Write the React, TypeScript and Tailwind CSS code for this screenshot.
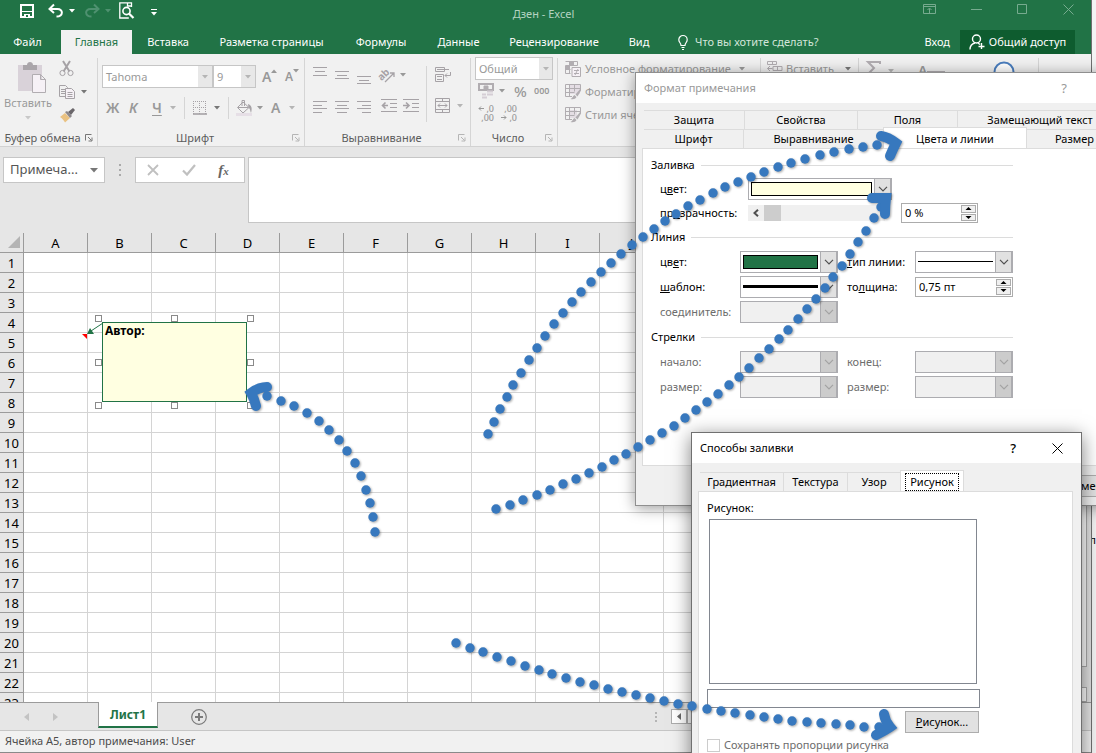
import React from "react";

type Kids = { children?: React.ReactNode };

const Caret = ({ className = "text-[#b5b5b5]" }: { className?: string }) => (
  <svg width="6" height="4" viewBox="0 0 6 4" className={`shrink-0 ${className}`} aria-hidden="true">
    <path d="M0 0h6L3 3.5z" fill="currentColor" />
  </svg>
);

type IconProps = Kids & { w?: number; h?: number; className?: string };

const Icon = ({ w = 16, h = 16, className = "text-[#b1adb1]", children }: IconProps) => (
  <svg
    width={w}
    height={h}
    viewBox={`0 0 ${w} ${h}`}
    fill="none"
    stroke="currentColor"
    className={`shrink-0 overflow-visible ${className}`}
    aria-hidden="true"
  >
    {children}
  </svg>
);

const Launcher = ({ className = "text-[#b5b5b5]" }: { className?: string }) => (
  <Icon w={8} h={8} className={className}>
    <path d="M6.5 .5h-6v6M3 3l3.5 3.5M7 3.500V7H3.500" />
  </Icon>
);

function Group({
  label,
  className,
  dark,
  children,
}: Kids & { label?: string; className: string; dark?: boolean }) {
  return (
    <section className={`flex shrink-0 flex-col ${className}`}>
      <div className="my-1 flex grow flex-col border-r border-[#d5d5d5]">
        <div className="h-[72px]">{children}</div>
        {label && (
          <div className="flex h-4 items-center pr-1">
            <span className="grow text-center text-[#5c5c5c]">{label}</span>
            <Launcher className={dark ? "text-[#777777]" : undefined} />
          </div>
        )}
      </div>
    </section>
  );
}

const AlignLines = ({ ys, kind }: { ys: number[]; kind: "left" | "center" | "right" }) => (
  <Icon w={14} h={18} className="text-[#a6a2a6]">
    {ys.map((y, i) => {
      const short = i % 2 === 1;
      const x1 = !short || kind === "left" ? 0 : kind === "center" ? 2 : 5;
      const x2 = !short || kind === "right" ? 14 : kind === "center" ? 12 : 9;
      return <path key={y} d={`M${x1} ${y}.5H${x2}`} />;
    })}
  </Icon>
);

const GridBrush = ({ dark }: { dark?: boolean }) => (
  <Icon>
    {dark ? <path d="M4 3h8v8H4z" fill="#e4dde4" stroke="none" /> : <path d="M5 1h10v9H5z" fill="#e4dde4" stroke="none" />}
    <path d="M15.500 6V.5H.5v12H7M.5 4.500h15M.5 8.500h9M4.500.5v12M9.500.5v7" />
    <path d="M15.500 4.500l-5 6 2 2 3.500-6z" fill="currentColor" stroke="none" />
    <path d="M9.500 11l2 2c-1 2-3 2.500-6 2 2-.5 2-3 4-4z" fill="currentColor" stroke="none" />
  </Icon>
);

const Chevron = () => (
  <svg width="10" height="6" viewBox="0 0 10 6" fill="none" stroke="currentColor" aria-hidden="true">
    <path d="M1 .8l4 4 4-4" strokeWidth="1.200" />
  </svg>
);

function Combo({
  id,
  label,
  className,
  disabled,
  children,
}: Kids & { id: string; label: string; className: string; disabled?: boolean }) {
  return (
    <button
      id={id}
      type="button"
      aria-label={label}
      aria-haspopup="listbox"
      disabled={disabled}
      className={`flex h-[22px] shrink-0 border border-r-2 border-[#acacb0] ${
        disabled ? "bg-[#f0f0f0] text-[#a3a3a3]" : "bg-white text-[#505050]"
      } ${className}`}
    >
      <span className="flex h-full grow items-center p-[2px]">{children}</span>
      <span
        className={`flex h-full w-4 items-center justify-center border-l border-[#acacb0] ${
          disabled ? "bg-[#cccccc]" : "bg-[#e1e1e1]"
        }`}
      >
        <Chevron />
      </span>
    </button>
  );
}

function Spin({ id, value, className }: { id: string; value: string; className: string }) {
  return (
    <span className={`flex h-5 shrink-0 border border-[#acacac] bg-white p-px ${className}`}>
      <input id={id} defaultValue={value} className="w-0 grow bg-transparent pl-[2px] text-black outline-none" />
      <span className="flex w-[15px] flex-col gap-px">
        {["M3.500 0l3 3h-6z", "M3.500 3l3-3h-6z"].map((d, i) => (
          <button
            key={d}
            type="button"
            aria-label={i === 0 ? "Увеличить" : "Уменьшить"}
            className="flex grow items-center justify-center border border-[#acacac] bg-[#f0f0f0]"
          >
            <svg width="7" height="3" viewBox="0 0 7 3" aria-hidden="true">
              <path d={d} />
            </svg>
          </button>
        ))}
      </span>
    </span>
  );
}

function Heading({ children }: Kids) {
  return (
    <h3 className="flex h-6 items-center gap-[6px]">
      {children}
      <span className="h-px grow bg-[#dcdcdc]" />
    </h3>
  );
}

const menuTabs = [
  ["Вставка", "w-[72px]"],
  ["Разметка страницы", "w-[135px]"],
  ["Формулы", "w-[84px]"],
  ["Данные", "w-[71px]"],
  ["Рецензирование", "w-[120px]"],
  ["Вид", "w-[50px]"],
];

function TitleBar() {
  return (
    <header className="bg-[#217346] text-white">
      <div className="flex h-[30px] items-start">
        <div className="flex w-[260px] shrink-0 pt-[2px] pl-[20px]">
          <button type="button" aria-label="Сохранить" className="w-7">
            <Icon w={14} h={16} className="text-white">
              <path d="M1 2h12v12H1z" strokeWidth="2" />
              <path d="M2 8.500h10" strokeWidth="1" />
              <path d="M4 11h6v4H4z" fill="currentColor" stroke="none" />
              <path d="M6 12h2v2H6z" fill="#217346" stroke="none" />
            </Icon>
          </button>
          <button type="button" aria-label="Отменить" className="flex w-9 items-center gap-[5px]">
            <Icon w={16} h={16} className="text-white">
              <path d="M2 6h7.500c6 0 6 7.500-1 7.500M6 1.500L1.500 6 6 10" strokeWidth="2" />
            </Icon>
            <Caret className="text-white" />
          </button>
          <button type="button" aria-label="Вернуть" className="flex w-[35px] items-center gap-[5px]">
            <Icon w={16} h={16} className="text-[#4f9170]">
              <path d="M14 6H6.500c-6 0-6 7.500 1 7.500M10 1.500L14.500 6 10 10" strokeWidth="2" />
            </Icon>
            <Caret className="text-[#4f9170]" />
          </button>
          <button type="button" aria-label="Просмотр" className="w-8">
            <Icon w={16} h={18} className="text-white">
              <path d="M12.500 5V.8H.8v15.200h9M8.500.5V4h4" strokeWidth="1.300" />
              <circle cx="7.500" cy="9" r="3.600" strokeWidth="1.600" />
              <path d="M10 11.500l4.500 4.500" strokeWidth="2.200" />
            </Icon>
          </button>
          <button type="button" aria-label="Настройка панели" className="flex flex-col items-center gap-[2px] pt-[7px]">
            <span className="h-px w-[6px] bg-white" />
            <Caret className="text-white" />
          </button>
        </div>
        <h1 className="grow pt-[6px] text-center text-[11px] leading-4 text-[#b5d3c2]">Дзен - Excel</h1>
        <div className="flex w-[264px] shrink-0 items-center justify-end gap-[35px] pt-[4px] pr-[17px] text-[#77ab8f]">
          <Icon w={13} h={11} className="text-current">
            <path d="M.5 .5h12v9H.5zM.5 2.500h12M6.500 9V4.500M4.500 6l2-2 2 2" />
          </Icon>
          <Icon w={11} h={11} className="text-current">
            <path d="M0 5.500h11" />
          </Icon>
          <Icon w={11} h={11} className="text-current">
            <path d="M.5 .5h9v9h-9z" />
          </Icon>
          <Icon w={11} h={11} className="text-current">
            <path d="M.5 .5l10 10M10.500 .5l-10 10" />
          </Icon>
        </div>
      </div>
      <nav className="flex h-6 items-stretch pr-4 text-[11px] whitespace-nowrap">
        <button type="button" className="w-[61px] pr-[6px]">Файл</button>
        <button type="button" className="w-[71px] bg-[#f1f1f1] text-[#217346]">Главная</button>
        {menuTabs.map(([name, w]) => (
          <button key={name} type="button" className={w}>
            {name}
          </button>
        ))}
        <button type="button" className="ml-[14px] flex items-center gap-[7px] text-[#d3e5da]">
          <Icon w={10} h={15} className="text-white">
            <path d="M3 10.500C3 8 .8 7.500.8 4.700a4.200 4.200 0 018.400 0C9.200 7.500 7 8 7 10.500zM3.500 12.500h3M4 14.500h2" strokeWidth="1.200" />
          </Icon>
          Что вы хотите сделать?
        </button>
        <button type="button" className="ml-auto pr-[10px]">Вход</button>
        <button type="button" className="flex w-[115px] items-center justify-center gap-1 bg-[#0e5c2f]">
          <Icon w={16} h={16} className="text-white">
            <circle cx="7.500" cy="5" r="4" strokeWidth="1.400" />
            <path d="M1 15.500c0-4 3-6 5-6.500M9 9l2 1.500M12.500 9v6M9.500 12.500h6" strokeWidth="1.400" />
          </Icon>
          Общий доступ
        </button>
      </nav>
    </header>
  );
}

function Ribbon() {
  return (
    <div className="flex h-[93px] shrink-0 overflow-hidden border-b border-[#d2d2d2] bg-[#f1f1f1] text-[11px] leading-4 whitespace-nowrap text-[#999999]">
      <Group label="Буфер обмена" className="w-[98px]" dark>
        <div className="flex">
          <button type="button" className="flex w-[56px] flex-col items-center pt-1">
            <Icon w={28} h={31} className="ml-2 text-[#b1adb1]">
              <path d="M0 3h24v26H0z" fill="#d9d2d9" stroke="none" />
              <path d="M5 3h4c0-4 6-4 6 0h4v5H5z" fill="#aaa6aa" stroke="none" />
              <path d="M14.500 12.500h8l5 5v13h-13zM22.500 12.500v5h5" fill="#f6f1f6" />
            </Icon>
            <span className="mt-[2px]">Вставить</span>
            <Caret className="mt-[5px] text-[#c8c8c8]" />
          </button>
          <div className="flex flex-col gap-[7px] pt-[3px] pl-[3px]">
            <Icon className="text-[#a6a2a6]">
              <path d="M4 0l6.500 10.500M11 0L4.500 10.500" strokeWidth="2" />
              <circle cx="3.500" cy="12" r="2.600" />
              <circle cx="11.500" cy="12" r="2.600" />
            </Icon>
            <span className="flex w-7 items-center justify-between">
              <Icon className="text-[#a6a2a6]">
                <path d="M.5 1.500h6l2 2v9h-8zM2 5.500h5M2 7.500h5M2 9.500h5" />
                <path d="M6.500 4.500h6l3 3v7h-9zM8.500 8.500h5M8.500 10.500h5M8.500 12.500h5" fill="#f6f1f6" />
              </Icon>
              <Caret className="text-[#777777]" />
            </span>
            <Icon>
              <path d="M1 10l5-4 5 5-5 4.500c-1-2-3-4.500-5-5.500z" fill="#eac282" stroke="none" />
              <path d="M6 5l2-1 5 5-2 2z" fill="#8b878b" stroke="none" />
              <path d="M9 5l5-4 2 2-4 5z" fill="#6a666a" stroke="none" />
            </Icon>
          </div>
        </div>
      </Group>

      <Group label="Шрифт" className="w-[207px]">
        <div className="flex items-center pt-[7px] pl-1">
          <button type="button" className="flex h-[23px] w-[111px] items-center border border-[#c6c6c6] bg-white text-left">
            <span className="grow pl-[3px]">Tahoma</span>
            <span className="flex h-full w-[14px] items-center justify-center bg-[#e8e8e8]"><Caret /></span>
          </button>
          <button type="button" className="flex h-[23px] w-[43px] items-center border border-[#c6c6c6] bg-white text-left">
            <span className="grow pl-[3px]">9</span>
            <span className="flex h-full w-[14px] items-center justify-center bg-[#e8e8e8]"><Caret /></span>
          </button>
          <span className="ml-[6px] flex w-[23px] items-start text-[14px] font-semibold">
            A
            <svg width="6" height="4" viewBox="0 0 6 4" aria-hidden="true"><path d="M0 4h6L3 .5z" fill="#999999" /></svg>
          </span>
          <span className="flex items-start text-[12px] font-semibold">
            A
            <Caret className="text-[#999999]" />
          </span>
        </div>
        <div className="flex items-center pt-[9px] pl-2 text-[14px] leading-5 font-semibold">
          <span className="w-[23px]">Ж</span>
          <span className="w-[23px] italic">К</span>
          <span className="w-[18px] underline underline-offset-2">Ч</span>
          <Caret />
          <span className="ml-2 h-[22px] w-px bg-[#d5d5d5]" />
          <Icon w={14} h={14} className="ml-2 text-[#a6a2a6]">
            <path d="M.5 0v13M6.500 0v13M12.500 0v13M0 .5h13M0 6.500h13" strokeDasharray="1 1" />
            <path d="M0 13h14" strokeWidth="1.600" />
          </Icon>
          <Caret className="ml-[7px] text-[#777777]" />
          <span className="ml-2 h-[22px] w-px bg-[#d5d5d5]" />
          <Icon w={17} h={16} className="ml-[7px] text-[#a6a2a6]">
            <path d="M7 2l6 5.500-6 5.500L1.500 7.500zM6 6V.500h2.500V6M2 7.500h10" />
            <path d="M12 4c3.500 1 4.500 4 3 9-1-2-.5-4-2.500-5.500z" fill="currentColor" stroke="none" />
            <path d="M0 14.500h16" stroke="#e6dfe6" strokeWidth="3" />
          </Icon>
          <Caret className="ml-1" />
          <span className="ml-2 w-[18px]">A</span>
          <Caret />
        </div>
      </Group>

      <Group label="Выравнивание" className="w-[166px]">
        <div className="flex h-full gap-2 pl-2">
          <div className="flex w-[105px] flex-col gap-[14px] pt-[9px]">
            <div className="flex gap-2">
              <AlignLines ys={[0, 4, 8]} kind="center" />
              <AlignLines ys={[4, 8, 11]} kind="center" />
              <AlignLines ys={[9, 13, 16]} kind="center" />
              <Icon w={17} h={17} className="text-[#a6a2a6]">
                <text x="-1" y="10" fontSize="10" fontWeight="700" fill="currentColor" stroke="none" fontFamily="Noto Sans" transform="rotate(-45 6 8)">ab</text>
                <path d="M6 15l9-9M11 6h4v4" strokeWidth="1.300" />
              </Icon>
              <Caret className="-ml-1 mt-[6px]" />
            </div>
            <div className="flex gap-2">
              <AlignLines ys={[2, 6, 9, 13]} kind="left" />
              <AlignLines ys={[2, 6, 9, 13]} kind="center" />
              <AlignLines ys={[2, 6, 9, 13]} kind="right" />
              <Icon className="ml-[2px] text-[#a6a2a6]">
                <path d="M0 .5h16M9 4.500h7M9 8.500h7M0 12.500h16" />
                <path d="M7 6.500H2M4.500 3.500l-3 3 3 3" strokeWidth="1.600" />
              </Icon>
              <Icon className="-ml-[2px] text-[#a6a2a6]">
                <path d="M0 .5h16M9 4.500h7M9 8.500h7M0 12.500h16" />
                <path d="M0 6.500h5M3 3.500l3 3-3 3" strokeWidth="1.600" />
              </Icon>
            </div>
          </div>
          <div className="h-[56px] w-px self-center bg-[#d5d5d5]" />
          <div className="flex flex-col gap-[15px] pt-[9px]">
            <Icon className="text-[#a6a2a6]">
              <path d="M.5 .5h9v4h-9zM.5 7.500h8v7h-8zM2 2.500h12M2 9.500h5M2 12.500h5M15.500 5v3.500H10M12 6.500l-2 2 2 2" />
            </Icon>
            <div className="flex items-center gap-[6px]">
              <Icon className="text-[#a6a2a6]">
                <path d="M.5 .5h14v14H.5zM.5 3.500h14M.5 11.500h14M7.500.5v3M7.500 11.500v3M3 7.500h9M5 5.500l-2 2 2 2M10 5.500l2 2-2 2" />
              </Icon>
              <Caret />
            </div>
          </div>
        </div>
      </Group>

      <Group label="Число" className="w-[87px]">
        <div className="-mt-px pl-1">
          <button type="button" className="flex h-[23px] w-[78px] items-center border border-[#c6c6c6] bg-white text-left">
            <span className="grow pl-[3px]">Общий</span>
            <span className="flex h-full w-[13px] items-center justify-center bg-[#e8e8e8]"><Caret /></span>
          </button>
          <div className="mt-[3px] flex items-center pl-[3px]">
            <Icon>
              <path d="M1 1h14v6H1z" strokeWidth="2" />
              <path d="M6 3h4v3H6z" fill="currentColor" />
              <path d="M9 8.500h6M9 11.500h6M4 11.500h4M4 14.500h5" stroke="#d5ced5" strokeWidth="2" />
            </Icon>
            <Caret className="ml-[5px]" />
            <span className="ml-[9px] w-5 text-[15px] font-medium">%</span>
            <span className="text-[9px] font-semibold">000</span>
          </div>
          <div className="mt-[5px] flex gap-[7px] pl-[3px] text-[9px] leading-[9px] font-medium">
            <span className="flex w-4 flex-col items-end">
              <span className="flex items-center gap-[2px]">
                <Icon w={6} h={5} className="text-[#999999]"><path d="M6 2.500H1M3 .5l-2 2 2 2" /></Icon>
                ,0
              </span>
              <span>,00</span>
            </span>
            <span className="flex w-4 flex-col items-end">
              <span>,00</span>
              <span className="flex items-center gap-[2px]">
                <Icon w={6} h={5} className="text-[#999999]"><path d="M0 2.500h5M3 .5l2 2-2 2" /></Icon>
                ,0
              </span>
            </span>
          </div>
        </div>
      </Group>

      <Group className="w-[203px]">
        <div className="flex flex-col gap-[6px] pt-[2px] pl-[7px]">
          <span className="flex h-[17px] items-center gap-1">
            <Icon>
              <path d="M.5 .5h12v4H.5v8h5M4.500.5v12M.5 8.500h5" />
              <path d="M4 1h5v3H4zM0 5h5v3H0z" fill="currentColor" stroke="none" />
              <path d="M7 6.500h8.500v9H7zM9 9.500h5M9 12.500h5M13 8l-3 6" fill="#f6f1f6" />
            </Icon>
            Условное форматирование
            <Caret className="ml-1" />
          </span>
          <span className="flex h-[17px] items-center gap-1"><GridBrush /> Форматировать как таблицу</span>
          <span className="flex h-[17px] items-center gap-1"><GridBrush dark /> Стили ячеек</span>
        </div>
      </Group>

      <Group className="w-[98px]">
        <div className="flex items-center gap-[3px] pt-[3px] pl-[6px]">
          <Icon>
            <path d="M.5 .5h9v3h-9zM5.500.5v3M6 5.500h9v4H6zM10.500 5.500v4M.5 11.500h9v3h-9zM5.500 7.500h-5M3 5L.5 7.500 3 10" />
          </Icon>
          Вставить
          <Caret className="ml-2 text-[#777777]" />
        </div>
      </Group>

      <Group className="w-[180px]">
        <div className="flex pt-[3px] pl-[7px]">
          <Icon w={16} h={14}>
            <path d="M14 3V1H2l6 6-6 6h12v-2" strokeWidth="2" />
          </Icon>
          <Caret className="mt-2 ml-[6px] text-[#b5b5b5]" />
          <span className="ml-[24px] flex w-[27px] text-[14px] leading-5 font-semibold">
            A
            <span className="mt-[10px] h-[2px] grow bg-[#b1adb1]" />
          </span>
          <Icon w={22} h={22} className="ml-12 text-[#4a7dbd]">
            <circle cx="11" cy="11" r="9.500" strokeWidth="2" fill="#ffffff" />
          </Icon>
        </div>
      </Group>
    </div>
  );
}

function FormulaBar() {
  return (
    <div className="flex h-[86px] shrink-0 items-start bg-[#e6e6e6] pt-[10px] pl-[3px] text-[#555555]">
      <button type="button" className="flex h-[26px] w-[102px] items-center justify-between border border-[#c6c6c6] bg-white pr-[6px] pl-[6px] text-[13px]">
        Примеча...
        <svg width="8" height="5" viewBox="0 0 8 5" aria-hidden="true"><path d="M0 0h8L4 4.500z" fill="#777777" /></svg>
      </button>
      <span className="ml-[14px] flex h-[26px] flex-col justify-center gap-[3px]">
        <i className="size-[2px] bg-[#aaaaaa]" />
        <i className="size-[2px] bg-[#aaaaaa]" />
        <i className="size-[2px] bg-[#aaaaaa]" />
      </span>
      <div className="ml-[14px] flex h-[26px] w-[110px] items-center justify-around border border-[#c6c6c6] bg-white pr-1">
        <Icon w={12} h={12} className="text-[#c0c0c0]">
          <path d="M1 1l10 10M11 1L1 11" strokeWidth="1.800" />
        </Icon>
        <Icon w={14} h={12} className="text-[#c0c0c0]">
          <path d="M1 6.500l4 4L13 1" strokeWidth="2.200" />
        </Icon>
        <span className="font-['Liberation_Serif',serif] text-[15px] leading-5 font-bold text-[#666666] italic">
          f<span className="text-[11px]">x</span>
        </span>
      </div>
      <input aria-label="Строка формул" className="ml-[3px] h-[66px] grow border border-[#c6c6c6] bg-white" />
    </div>
  );
}

const columns = "ABCDEFGHIJKLMNOP".split("");
const rows = Array.from({ length: 23 }, (_, i) => i + 1);
const handles = [
  "left-[-8px] top-[-8px]",
  "left-[68px] top-[-8px]",
  "left-[144px] top-[-8px]",
  "left-[-8px] top-[36px]",
  "left-[144px] top-[36px]",
  "left-[-8px] top-[79px]",
  "left-[68px] top-[79px]",
  "left-[144px] top-[79px]",
];

function Sheet() {
  return (
    <div className="relative min-h-0 grow overflow-hidden bg-white">
      <table className="w-[1048px] table-fixed border-separate border-spacing-0 text-[13px] leading-4 text-black">
        <thead>
          <tr className="h-5 bg-[#e6e6e6]">
            <th className="h-5 w-6 border-r border-b border-[#9b9b9b] p-0" aria-label="Выделить все">
              <svg width="13" height="13" viewBox="0 0 13 13" className="ml-[7px]" aria-hidden="true"><path d="M13 0v12H1z" fill="#b4b4b4" /></svg>
            </th>
            {columns.map((c) => (
              <th key={c} scope="col" className="h-5 w-16 border-r border-b border-[#9b9b9b] p-0 font-normal">{c}</th>
            ))}
          </tr>
        </thead>
        <tbody>
          {rows.map((r) => (
            <tr key={r}>
              <th scope="row" className="h-5 border-r border-b border-[#9b9b9b] bg-[#e6e6e6] p-0 font-normal">{r}</th>
              {columns.map((c) => (
                <td key={c} className="h-5 border-r border-b border-[#d4d4d4] p-0" />
              ))}
            </tr>
          ))}
        </tbody>
      </table>
      <div className="absolute top-[89px] left-[102px] h-[80px] w-[145px] border border-[#217346] bg-[#ffffe1] pl-[2px] text-[12px] leading-4 font-bold text-black">
        Автор:
        {handles.map((h) => (
          <span key={h} className={`absolute size-[7px] border border-[#8a8a8a] bg-white ${h}`} />
        ))}
        <svg width="22" height="18" viewBox="0 0 22 18" className="absolute top-0 left-[-22px]" aria-hidden="true">
          <path d="M1 11h5v5z" fill="#ff0000" />
          <path d="M22 0L10 8" stroke="#217346" />
          <path d="M6 11l3-6 4 6z" fill="#217346" />
        </svg>
      </div>
    </div>
  );
}

function SheetTabs() {
  return (
    <>
      <div className="flex h-7 shrink-0 border-t border-[#9b9b9b] bg-[#e6e6e6]">
        <div className="flex w-[98px] items-center gap-6 pl-6 text-[#c3c3c3]">
          <svg width="5" height="8" viewBox="0 0 5 8" aria-hidden="true"><path d="M5 0v8L0 4z" fill="currentColor" /></svg>
          <svg width="5" height="8" viewBox="0 0 5 8" aria-hidden="true"><path d="M0 0v8l5-4z" fill="currentColor" /></svg>
        </div>
        <button type="button" className="-mt-px h-[26px] w-[60px] border-x border-b-2 border-x-[#9b9b9b] border-b-[#217346] bg-white pt-px text-[12px] font-bold text-[#217346]">Лист1</button>
        <button type="button" aria-label="Новый лист" className="ml-[33px]">
          <Icon w={16} h={16} className="text-[#7a7a7a]">
            <circle cx="8" cy="8" r="7.300" strokeWidth="1.200" />
            <path d="M8 4v8M4 8h8" strokeWidth="2" />
          </Icon>
        </button>
        <div className="ml-auto flex w-[436px] items-center">
          <span className="mr-[14px] flex flex-col gap-[2px]">
            <i className="size-[2px] bg-[#b5b5b5]" />
            <i className="size-[2px] bg-[#b5b5b5]" />
            <i className="size-[2px] bg-[#b5b5b5]" />
          </span>
          <button type="button" aria-label="Влево" className="flex h-[15px] w-4 items-center justify-center border border-[#acacac] bg-white">
            <svg width="4" height="7" viewBox="0 0 4 7" aria-hidden="true"><path d="M4 0v7L0 3.500z" fill="#666666" /></svg>
          </button>
          <span className="h-[15px] w-20 border border-[#acacac] bg-white" />
        </div>
      </div>
      <footer className="flex h-[23px] shrink-0 items-center border-y border-t-[#c6c6c6] border-b-[#8a8a8a] bg-[#f1f1f1] pl-[5px] text-[11px] text-[#4c4c4c]">
        Ячейка A5, автор примечания: User
      </footer>
    </>
  );
}

const tab = "shrink-0 border-t border-[#dcdcdc]";

function FormatDialog() {
  return (
    <section
      aria-label="Формат примечания"
      className="absolute top-[72px] left-[635px] flex h-[434px] w-[497px] flex-col border border-[#8f8f8f] bg-[#f0f0f0] text-[11px] leading-4 whitespace-nowrap text-black shadow-[0_2px_14px_rgba(0,0,0,0.4)]"
    >
      <div className="flex h-[30px] shrink-0 items-center bg-white pr-16 pl-2 text-[#999999]">
        <h2 className="grow">Формат примечания</h2>
        <button type="button" aria-label="Справка" className="text-[13px]">?</button>
      </div>
      <div className="mt-[7px] flex h-[19px] shrink-0 pl-2">
        <button type="button" className={`w-[101px] border-r ${tab}`}>Защита</button>
        <button type="button" className={`w-[113px] border-r ${tab}`}>Свойства</button>
        <button type="button" className={`w-[100px] border-r ${tab}`}>Поля</button>
        <button type="button" className={`w-[165px] border-r ${tab}`}>Замещающий текст</button>
      </div>
      <div className="flex h-[19px] shrink-0 pl-2">
        <button type="button" className={`w-[100px] border-r ${tab}`}>Шрифт</button>
        <button type="button" className={`w-[139px] ${tab}`}>Выравнивание</button>
        <button type="button" className="-mt-[2px] -mb-px w-[144px] shrink-0 border border-b-0 border-[#dcdcdc] bg-white">Цвета и линии</button>
        <button type="button" className={`w-[96px] border-r ${tab}`}>Размер</button>
      </div>
      <div className="mr-[6px] ml-[6px] flex h-[318px] shrink-0 flex-col border border-[#dcdcdc] bg-white pt-1 pr-[111px] pl-2">
        <Heading>Заливка</Heading>
        <div className="flex h-6 items-center pl-[9px]">
          <label htmlFor="fill" className="w-[88px] shrink-0">ц<u>в</u>ет:</label>
          <Combo id="fill" label="Цвет заливки" className="w-[144px]">
            <span className="h-[14px] grow border border-black bg-[#ffffe1]" />
          </Combo>
        </div>
        <div className="flex h-6 items-center pl-[9px]">
          <label htmlFor="opacity" className="w-[88px] shrink-0">пр<u>о</u>зрачность:</label>
          <span className="flex h-4 w-[137px] shrink-0 items-center bg-[#f0f0f0]">
            <button type="button" aria-label="Меньше" className="flex w-4 justify-center">
              <svg width="6" height="8" viewBox="0 0 6 8" fill="none" stroke="#505050" aria-hidden="true"><path d="M5 .8L1.500 4 5 7.200" strokeWidth="2" /></svg>
            </button>
            <span className="h-4 w-[17px] bg-[#cdcdcd]" />
          </span>
          <Spin id="opacity" value="0 %" className="ml-4 w-[77px]" />
        </div>
        <Heading>Линия</Heading>
        <div className="mb-px grid auto-rows-[25px] grid-cols-[80px_107px_68px_98px] items-center pl-[9px]">
          <label htmlFor="lc">цв<u>е</u>т:</label>
          <Combo id="lc" label="Цвет линии" className="w-[98px]">
            <span className="h-[14px] grow border border-black bg-[#217346]" />
          </Combo>
          <label htmlFor="lt"><u>т</u>ип линии:</label>
          <Combo id="lt" label="Тип линии" className="w-[98px]"><span className="h-px grow bg-black" /></Combo>
          <label htmlFor="lp"><u>ш</u>аблон:</label>
          <Combo id="lp" label="Шаблон" className="w-[98px]"><span className="h-[3px] grow bg-black" /></Combo>
          <label htmlFor="lw">то<u>л</u>щина:</label>
          <Spin id="lw" value="0,75 пт" className="w-[98px]" />
          <label htmlFor="cn" className="text-[#6d6d6d]">соединитель:</label>
          <Combo id="cn" label="Соединитель" className="w-[98px]" disabled />
        </div>
        <Heading>Стрелки</Heading>
        <div className="grid auto-rows-[25px] grid-cols-[80px_107px_68px_98px] items-center pl-[9px] text-[#6d6d6d]">
          <label htmlFor="as">начало:</label>
          <Combo id="as" label="Начало" className="w-[98px]" disabled />
          <label htmlFor="ae">конец:</label>
          <Combo id="ae" label="Конец" className="w-[98px]" disabled />
          <label htmlFor="ss">размер:</label>
          <Combo id="ss" label="Размер начала" className="w-[98px]" disabled />
          <label htmlFor="se">размер:</label>
          <Combo id="se" label="Размер конца" className="w-[98px]" disabled />
        </div>
      </div>
      <div className="flex justify-end gap-2 pt-[9px] pr-[5px]">
        <button type="button" className="h-[22px] w-[76px] border border-[#adadad] bg-[#e1e1e1]">ОК</button>
        <button type="button" className="h-[22px] w-[76px] border border-[#adadad] bg-[#e1e1e1]">Отмена</button>
      </div>
    </section>
  );
}

function FillDialog() {
  return (
    <section
      aria-label="Способы заливки"
      className="absolute top-[432px] left-[691px] flex h-[360px] w-[391px] flex-col border border-[#707070] bg-[#f0f0f0] text-[11px] leading-4 whitespace-nowrap text-black shadow-[0_4px_18px_rgba(0,0,0,0.5)]"
    >
      <div className="flex h-[30px] shrink-0 items-center bg-white pr-[18px] pl-2">
        <h2 className="grow">Способы заливки</h2>
        <button type="button" aria-label="Справка" className="mr-9 text-[13px] font-medium">?</button>
        <button type="button" aria-label="Закрыть">
          <Icon w={11} h={11} className="text-black">
            <path d="M.5 .5l10 10M10.500 .5l-10 10" />
          </Icon>
        </button>
      </div>
      <div className="mt-[9px] flex h-[19px] shrink-0 pl-2">
        <button type="button" className={`w-[84px] border-r ${tab}`}>Градиентная</button>
        <button type="button" className={`w-[64px] border-r ${tab}`}>Текстура</button>
        <button type="button" className={`w-[52px] ${tab}`}>Узор</button>
        <button type="button" className="-mt-[2px] -mb-px flex w-[64px] shrink-0 items-center justify-center border border-b-0 border-[#dcdcdc] bg-white">
          <span className="border border-dotted border-black px-1">Рисунок</span>
        </button>
      </div>
      <div className="mr-2 ml-[6px] flex grow flex-col items-start border border-[#dcdcdc] bg-white pt-2 pl-2">
        <h3>Рисунок:</h3>
        <div className="mt-[3px] ml-[2px] h-[165px] w-[268px] border border-[#828790]" />
        <input aria-label="Имя рисунка" className="mt-[5px] h-[19px] w-[273px] border border-[#828790] bg-white" />
        <button type="button" className="mt-[3px] ml-[198px] h-[22px] w-[74px] border border-[#adadad] bg-[#e1e1e1]"><u>Р</u>исунок...</button>
        <label className="mt-1 flex items-center gap-1 text-[#6d6d6d]">
          <input type="checkbox" disabled className="size-[13px] appearance-none border border-[#cccccc] bg-white" />
          Сохранять пропорции рисунка
        </label>
      </div>
    </section>
  );
}

const trails: { dots: string; head: string }[] = [
  {
    dots: "375,532 373,517 370,503 366,490 361,476 355,463 347,451 339,440 329,430 319,421 307,413 294,406 281,401 267,396",
    head: "M267 387Q259 387 251 393Q254 398 256 406",
  },
  {
    dots: "488,434 494,422 500,409 507,397 513,385 521,373 529,360 537,348 545,336 554,324 563,313 572,302 581,292 591,282 601,272 611,263 621,254 632,245 643,237 654,229 665,221 676,214 688,206 700,200 713,193 725,187 738,182 751,177 764,172 778,167 791,163 805,159 820,155 834,152 849,149 863,147 877,145",
    head: "M881 136Q888 137 896 143Q893 149 890 156",
  },
  {
    dots: "496,509 510,505 523,500 537,495 550,490 563,484 576,479 589,473 602,467 614,460 626,454 638,447 650,440 662,433 674,426 685,418 696,410 707,402 718,394 729,385 739,377 749,368 759,358 769,349 779,339 788,330 798,319 807,309 816,299 825,288 833,277 842,266 850,254 858,242 866,231 874,218 881,207",
    head: "M872 198Q880 198 886 198Q885 206 885 214",
  },
  {
    dots: "456,643 470,648 483,652 497,657 511,661 525,666 539,670 552,674 566,678 580,682 594,685 608,689 622,692 636,695 650,698 664,701 678,704 692,706 707,709 721,711 735,713 750,715 764,717 778,719 792,721 807,722 821,723 836,724 850,725 864,727 879,727",
    head: "M884 714Q885 721 890 727Q884 731 876 735",
  },
];

function Trails() {
  return (
    <svg
      width="1096"
      height="753"
      viewBox="0 0 1096 753"
      className="pointer-events-none absolute top-0 left-0 drop-shadow-[1px_1px_1px_rgba(0,0,0,0.35)]"
      aria-hidden="true"
    >
      {trails.map((t) => (
        <g key={t.head} fill="#3778be">
          {t.dots.split(" ").map((p) => {
            const [x, y] = p.split(",");
            return <circle key={p} cx={x} cy={y} r="4.700" />;
          })}
          <path d={t.head} fill="none" stroke="#3778be" strokeWidth="10" strokeLinecap="round" />
        </g>
      ))}
    </svg>
  );
}

export default function App() {
  return (
    <main className="relative flex h-screen overflow-hidden bg-[#f4f4f4] font-['Noto_Sans',sans-serif]">
      <div className="flex min-w-0 grow flex-col border-r border-[#707070] bg-[#e6e6e6]">
        <TitleBar />
        <Ribbon />
        <FormulaBar />
        <div className="flex min-h-0 grow">
          <Sheet />
          <div className="flex w-5 shrink-0 flex-col gap-5 bg-[#e1e1e1] pr-1">
            <span className="min-h-0 grow border border-[#acacac] bg-white" />
            <button type="button" aria-label="Вниз" className="flex h-[15px] shrink-0 items-center justify-center border border-[#acacac] bg-white">
              <Caret className="text-[#666666]" />
            </button>
          </div>
        </div>
        <SheetTabs />
      </div>
      <aside className="flex w-1 shrink-0 justify-end overflow-hidden pt-[532px] text-[11px] leading-4">л</aside>
      <FormatDialog />
      <FillDialog />
      <Trails />
    </main>
  );
}
